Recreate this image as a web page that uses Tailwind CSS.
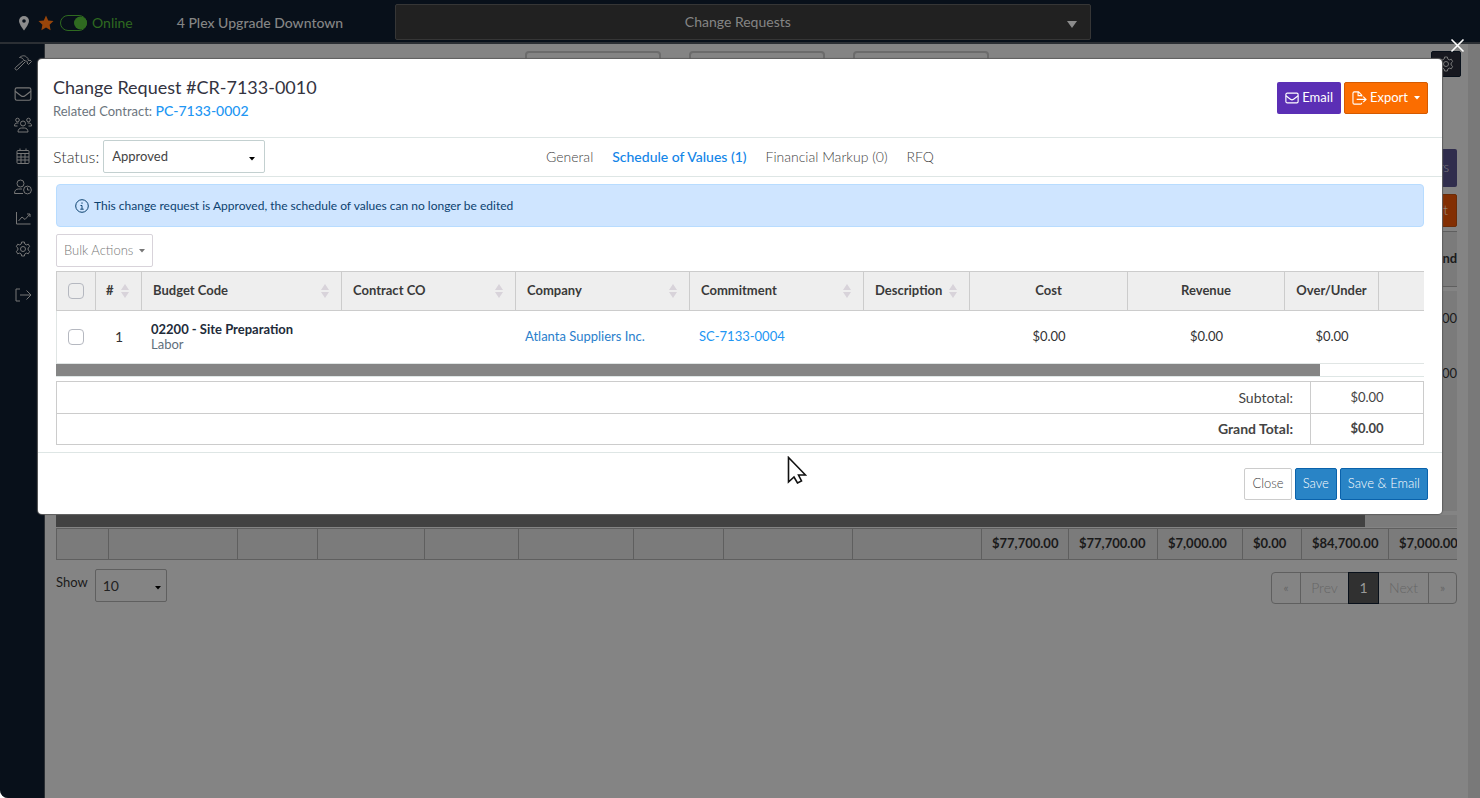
<!DOCTYPE html>
<html lang="en">
<head>
<meta charset="utf-8">
<title>Change Requests</title>
<script src="https://cdn.jsdelivr.net/npm/@tailwindcss/browser@4"></script>
</head>
<body class="bg-white font-['Lato',sans-serif] text-[13px] text-[#333]">
<svg class="hidden" aria-hidden="true">
  <symbol id="sort" viewBox="0 0 8 14"><path d="M4 0L8 6H0zM4 14L0 8h8z" fill="#d8d3da"/></symbol>
  <symbol id="caret" viewBox="0 0 6 4"><path d="M0 0h6L3 3.5z" fill="currentColor"/></symbol>
  <symbol id="mail" viewBox="0 0 16 14"><rect x="1" y="1.5" width="14" height="11" rx="1.5"/><path d="M1 4.5l5.2 4a3 3 0 0 0 3.6 0l5.2-4"/></symbol>
  <symbol id="gear" viewBox="0 0 16 16"><circle cx="8" cy="8" r="2.5"/><path d="M6.6 1h2.8l.4 2 1.5.9 2-.7 1.4 2.4-1.6 1.4v2l1.6 1.4-1.4 2.4-2-.7-1.5.9-.4 2H6.6l-.4-2-1.5-.9-2 .7-1.400-2.400L2.900 9V7L1.300 5.600l1.400-2.400 2 .7L6.200 3z"/></symbol>
</svg>

<div class="relative flex min-h-screen flex-col overflow-hidden rounded-bl-lg bg-[#848484]">
  <header class="flex h-11 items-center border-b-2 border-[#2b2f34] bg-[#08101a] pt-0.5">
    <div class="flex w-[395px] items-center pt-0.5">
      <svg class="ml-[18px] h-4 w-3" viewBox="0 0 12 16"><path d="M6 1a5 5 0 0 0-5 5c0 3.200 5 9.500 5 9.500S11 9.200 11 6a5 5 0 0 0-5-5z" fill="#8c8c8c"/><circle cx="6" cy="6" r="1.800" fill="#08101a"/></svg>
      <svg class="ml-2 h-4 w-4" viewBox="0 0 16 16"><path d="M8 .5l2.200 4.900 5.300.6-3.900 3.700 1 5.600L8 12.600l-4.600 2.700 1-5.600L.5 6l5.300-.6z" fill="#98450a"/></svg>
      <button class="ml-1.5 flex items-center gap-1 text-[#2f6a20]" role="switch" aria-checked="true">
        <svg class="h-4 w-7" viewBox="0 0 28 16"><rect x=".5" y=".5" width="26" height="15" rx="7.500" fill="none" stroke="currentColor"/><circle cx="20.500" cy="8" r="6.500" fill="currentColor"/></svg>
        <span class="text-sm">Online</span>
      </button>
      <span class="ml-11 text-sm font-medium text-[#858585]">4 Plex Upgrade Downtown</span>
    </div>
    <div class="relative w-[47%]">
      <select aria-label="Module" class="block h-9 w-full appearance-none rounded-xs border border-[#363636] bg-[#212121] pr-2.5 text-center text-sm text-[#858585]"><option>Change Requests</option></select>
      <svg class="pointer-events-none absolute top-[17px] right-3.5 h-[7px] w-2.5 text-[#8c8c8c]" viewBox="0 0 6 4" preserveAspectRatio="none"><path d="M0 0h6L3 4z" fill="currentColor"/></svg>
    </div>
  </header>

  <div class="flex flex-1">
    <nav class="flex w-[45px] shrink-0 flex-col items-center border-r border-[#2b2f34] bg-[#08101a] pt-[11px] pl-0.5 text-[#777]">
      <ul class="flex flex-col gap-[15px] [&_svg]:h-4 [&_svg]:w-[18px] [&_svg]:fill-none [&_svg]:stroke-current">
        <li><a href="#" aria-label="Jobs"><svg viewBox="0 0 18 16"><path d="M9.500 5.500L1.500 12.500a1.300 1.300 0 0 0 2 2L11 7M5.500 2.500C8 .3 11 .3 12.500 2l1.500 1.500v1.500l1 .8 1-.8 1.500 1.500-3 3L13 8l.5-1-1-1H11L9.500 4.500C8.500 3 7 2.500 5.500 2.500z"/></svg></a></li>
        <li><a href="#" aria-label="Messages"><svg><use href="#mail"/></svg></a></li>
        <li><a href="#" aria-label="Team"><svg viewBox="0 0 18 16"><circle cx="9" cy="6.500" r="2.500"/><circle cx="3.500" cy="3" r="1.800"/><circle cx="14.500" cy="3" r="1.800"/><path d="M4 15c0-2.500 1.500-4 3.500-4h3c2 0 3.500 1.500 3.500 4zM.5 9c0-2 1-3 2.500-3h1.500M17.500 9c0-2-1-3-2.500-3h-1.500M.5 9h3M14.500 9h3"/></svg></a></li>
        <li><a href="#" aria-label="Calendar"><svg viewBox="0 0 18 16"><rect x="3" y="2.500" width="12" height="13" rx="1"/><path d="M3 5.500h12M3 9h12M3 12h12M7 5.500v10M11 5.500v10M6 .5v2M12 .5v2"/></svg></a></li>
        <li><a href="#" aria-label="Time"><svg viewBox="0 0 18 16"><circle cx="6.500" cy="4.500" r="3.500"/><path d="M9 14.500H.5c0-3 1.500-4.500 4-4.500h3.500M13.500 8.500v2.500h2"/><circle cx="13.500" cy="11" r="3.900"/></svg></a></li>
        <li><a href="#" aria-label="Reports"><svg viewBox="0 0 18 16"><path d="M2.500 2v12h14M4.500 11l3.500-4 3 2.500L16 4M13 4h3v3"/></svg></a></li>
        <li><a href="#" aria-label="Settings"><svg><use href="#gear"/></svg></a></li>
        <li class="pt-[15px]"><a href="#" aria-label="Log out"><svg viewBox="0 0 18 16"><path d="M6 2H2v12h4M6 8h11M12.500 3.500L17 8l-4.500 4.500"/></svg></a></li>
      </ul>
    </nav>

    <main class="flex min-w-0 flex-1 flex-col px-[11px] text-[#1a1a1a]">
      <div class="grid grid-cols-[1fr_auto_1fr] pt-[7px]">
        <div></div>
        <div class="flex gap-7">
          <div class="h-20 w-[136px] rounded border-2 border-[#6b6b6b]"></div>
          <div class="h-20 w-[136px] rounded border-2 border-[#6b6b6b]"></div>
          <div class="h-20 w-[136px] rounded border-2 border-[#6b6b6b]"></div>
        </div>
        <button aria-label="Page settings" class="-mr-1 flex h-[26px] w-[30px] items-center justify-center justify-self-end rounded-xs border border-[#08101a] bg-[#17181f] text-[#777]"><svg class="h-4 w-4 fill-none stroke-current"><use href="#gear"/></svg></button>
      </div>
      <div class="flex flex-col items-end gap-[7px] pt-[18px]">
        <button class="h-[38px] rounded-xs bg-[#302d4d] px-2 font-light text-[#858585]">Filters</button>
        <button class="h-[33px] rounded-xs border border-[#6b2c08] bg-[#832f03] px-2 font-light text-[#999]">Export</button>
      </div>
      <div class="mt-1 flex h-14 items-center justify-end overflow-hidden border-y border-[#5f5f5f] bg-[#7b7b7b] font-bold"><span class="-mr-3">Over/Under</span></div>
      <div class="mt-1 flex h-[220px] flex-col items-end bg-[#7b7b7b]">
        <span class="flex h-[55px] items-center">$7,000.00</span>
        <span class="flex h-[55px] items-center">$7,000.00</span>
      </div>
      <div class="mt-1 h-3 bg-[#7b7b7b]"><div class="h-3 bg-[#424242]" style="width:93.4%"></div></div>
      <div class="mt-px overflow-hidden">
        <table class="w-[105%] table-fixed border-separate border-spacing-0 border-y border-l border-[#5f5f5f] bg-[#7b7b7b] font-bold [&_td]:h-[30px] [&_td]:border-r [&_td]:border-[#5f5f5f] [&_td]:p-0 [&_td]:pl-2.5">
          <colgroup><col class="w-[52px]"><col class="w-[129px]"><col class="w-[80px]"><col class="w-[107px]"><col class="w-[94px]"><col class="w-[115px]"><col class="w-[90px]"><col class="w-[129px]"><col class="w-[129px]"><col class="w-[87px]"><col class="w-[89px]"><col class="w-[85px]"><col class="w-[59px]"><col class="w-[87px]"><col></colgroup>
          <tr><td></td><td></td><td></td><td></td><td></td><td></td><td></td><td></td><td></td><td>$77,700.00</td><td>$77,700.00</td><td>$7,000.00</td><td>$0.00</td><td>$84,700.00</td><td>$7,000.00</td></tr>
        </table>
      </div>
      <div class="flex items-start justify-between pt-[9px]">
        <div class="flex gap-[7px]">
          <label for="show" class="pt-1">Show</label>
          <div class="relative">
            <select id="show" class="block h-[33px] w-[72px] appearance-none rounded-xs border border-[#5f5f5f] px-[7px] text-sm text-[#222]"><option>10</option></select>
            <svg class="pointer-events-none absolute top-[17px] right-1.5 h-1 w-1.5 text-black"><use href="#caret"/></svg>
          </div>
        </div>
        <div class="mt-[3px] flex h-8 rounded border border-[#5f5f5f] text-sm text-[#666]">
          <button class="w-[29px] border-r border-[#5f5f5f] text-xs">«</button>
          <button class="w-[47px] font-light">Prev</button>
          <button class="-my-px w-[31px] border border-[#08101a] bg-[#303030] text-[#999]">1</button>
          <button class="w-[50px] border-r border-[#5f5f5f] font-light">Next</button>
          <button class="w-[27px] text-xs">»</button>
        </div>
      </div>
    </main>
    <div class="w-3 shrink-0 bg-[#797979]"></div>
  </div>

  <!-- Change request dialog -->
  <button aria-label="Close dialog" class="absolute top-[38px] right-[15px] text-white"><svg class="h-[15px] w-[15px]" viewBox="0 0 15 15" fill="none" stroke="currentColor" stroke-width="1.600"><path d="M1.500 1.500l12 12M13.500 1.500l-12 12"/></svg></button>
  <section role="dialog" aria-label="Change Request" class="absolute inset-x-[38px] top-[59px] rounded bg-white shadow-[0_0_1px_1px_#5f5f5f]">
    <div class="flex h-[79px] items-start justify-between border-b border-[#dee6e5] pr-3.5 pl-[15px]">
      <div class="pt-4">
        <h1 class="text-lg leading-6 text-[#33333f]">Change Request #CR-7133-0010</h1>
        <p class="leading-6 text-[#6c757d]">Related Contract: <a href="#" class="text-sm leading-6 font-medium text-[#2196f3]">PC-7133-0002</a></p>
      </div>
      <div class="flex gap-[3px] pt-[23px] text-white">
        <button class="flex h-8 items-center gap-[3px] rounded-xs bg-[#5b2fb5] px-2"><svg class="h-3.5 w-3.5 fill-none stroke-current stroke-[1.3]"><use href="#mail"/></svg>Email</button>
        <button class="flex h-8 items-center gap-[3px] rounded-xs border border-[#d45a00] bg-[#fb6d00] px-[7px]"><svg class="h-3.5 w-[15px]" viewBox="0 0 16 15" fill="none" stroke="currentColor" stroke-width="1.200"><path d="M10.500 6V4.500L7 1H2.500Q1 1 1 2.500v10Q1 14 2.500 14H9q1.500 0 1.500-1.500M6.500 1v4h4M5 9h10M12 6l3 3-3 3"/></svg>Export<svg class="ml-[3px] h-1 w-1.5"><use href="#caret"/></svg></button>
      </div>
    </div>

    <div class="grid h-[39px] grid-cols-[1fr_auto_1fr] items-start border-b border-[#dee6e5] pt-0.5 pl-[15px]">
      <div class="flex items-center gap-1">
        <label for="status" class="text-base font-light">Status:</label>
        <div class="relative">
          <select id="status" class="block h-[33px] w-[162px] appearance-none rounded-xs border border-[#c3d0d0] px-2 text-[13px] text-[#444]"><option>Approved</option></select>
          <svg class="pointer-events-none absolute top-[17px] right-2.5 h-1 w-1.5 text-black"><use href="#caret"/></svg>
        </div>
      </div>
      <nav class="-ml-[15px] flex h-[34px] items-center gap-[19px] text-sm font-light text-[#444]">
        <a href="#">General</a>
        <a href="#" class="font-medium text-[#1285e8]">Schedule of Values (1)</a>
        <a href="#">Financial Markup (0)</a>
        <a href="#">RFQ</a>
      </nav>
      <div></div>
    </div>

    <div class="px-[18px] pt-[7px] pb-[7px]">
      <div class="flex h-[43px] items-center gap-[5px] rounded border border-[#b8dcff] bg-[#cfe5ff] px-[18px] text-xs text-[#0c4270]">
        <svg class="h-3.5 w-3.5" viewBox="0 0 14 14" fill="none" stroke="currentColor"><circle cx="7" cy="7" r="6.300"/><path d="M5.500 6.500H7v3.500M5.300 10.200h3.400M7 3.400v1.400"/></svg>
        <span>This change request is Approved, the schedule of values can no longer be edited</span>
      </div>
      <button class="mt-[7px] flex h-[33px] items-center gap-1.5 rounded-xs border border-[#d8d3da] px-[7px] font-light text-[#777]">Bulk Actions<svg class="h-1 w-1.5"><use href="#caret"/></svg></button>

      <div class="mt-1 overflow-hidden">
        <table class="w-[108%] table-fixed border-separate border-spacing-0 [&_input]:ml-[11px] [&_input]:block [&_input]:h-4 [&_input]:w-4 [&_input]:appearance-none [&_input]:rounded [&_input]:border [&_input]:border-[#b5b8c0] [&_input]:bg-white">
          <colgroup><col class="w-[40px]"><col class="w-[46px]"><col class="w-[200px]"><col class="w-[174px]"><col class="w-[174px]"><col class="w-[174px]"><col class="w-[106px]"><col class="w-[158px]"><col class="w-[157px]"><col class="w-[94px]"><col></colgroup>
          <thead class="bg-[#eee] text-left text-[#3a3a3a] [&_svg]:h-3.5 [&_svg]:w-2 [&_th]:h-[40px] [&_th]:border-y [&_th]:border-r [&_th]:border-[#ccc] [&_th]:p-0 [&_th]:font-bold">
            <tr>
              <th class="border-l"><input type="checkbox" aria-label="Select all" class="bg-transparent!"></th>
              <th><div class="flex items-center justify-between pr-3 pl-2.5">#<svg><use href="#sort"/></svg></div></th>
              <th><div class="flex items-center justify-between pr-3 pl-[11px]">Budget Code<svg><use href="#sort"/></svg></div></th>
              <th><div class="flex items-center justify-between pr-3 pl-[11px]">Contract CO<svg><use href="#sort"/></svg></div></th>
              <th><div class="flex items-center justify-between pr-3 pl-[11px]">Company<svg><use href="#sort"/></svg></div></th>
              <th><div class="flex items-center justify-between pr-3 pl-[11px]">Commitment<svg><use href="#sort"/></svg></div></th>
              <th><div class="flex items-center justify-between pr-3 pl-[11px]">Description<svg><use href="#sort"/></svg></div></th>
              <th class="text-center">Cost</th>
              <th class="text-center">Revenue</th>
              <th class="text-center">Over/Under</th>
              <th></th>
            </tr>
          </thead>
          <tbody class="[&_td]:h-[53px] [&_td]:border-b [&_td]:border-[#e0e5e4] [&_td]:p-0 [&_td]:pl-[9px]">
            <tr>
              <td class="border-l pl-0!"><input type="checkbox" aria-label="Select line 1"></td>
              <td class="pl-0! text-center text-sm">1</td>
              <td><div class="leading-[15px]"><div class="font-bold text-[#222b3a]">02200 - Site Preparation</div><div class="text-[#5f6f7c]">Labor</div></div></td>
              <td></td>
              <td><a href="#" class="text-[#2a80cc]">Atlanta Suppliers Inc.</a></td>
              <td><a href="#" class="text-[#2196f3]">SC-7133-0004</a></td>
              <td></td>
              <td class="pl-0! text-center">$0.00</td>
              <td class="pl-0! text-center">$0.00</td>
              <td class="pl-0! text-center">$0.00</td>
              <td></td>
            </tr>
          </tbody>
        </table>
        <div class="border-b border-[#dee6e5]"><div class="h-3 bg-[#858585]" style="width:92.4%"></div></div>
      </div>

      <table class="mt-1 w-full border-collapse text-[#444] [&_td]:w-[113px] [&_td]:text-center [&_td,&_th]:p-0 [&_th]:pr-[17px] [&_th]:text-right">
        <tr class="h-8"><th class="border border-[#ccc] text-sm font-normal">Subtotal:</th><td class="border border-[#ccc]">$0.00</td></tr>
        <tr class="h-[31px]"><th class="border border-[#ccc] text-sm font-bold">Grand Total:</th><td class="border border-[#ccc] font-bold">$0.00</td></tr>
      </table>
    </div>

    <div class="flex justify-end gap-[3px] border-t border-[#dee6e5] px-3.5 pt-[15px] pb-3.5">
      <button class="h-8 rounded-xs border border-[#ccc] px-[7px] font-light text-[#444]">Close</button>
      <button class="h-8 rounded-xs border border-[#0a62ab] bg-[#2984c6] px-[7px] font-light text-white">Save</button>
      <button class="h-8 rounded-xs border border-[#0a62ab] bg-[#2984c6] px-[7px] font-light text-white">Save &amp; Email</button>
    </div>
  </section>

  <!-- Mouse pointer -->
  <svg class="pointer-events-none absolute top-[456px] left-[787px] h-7 w-5" viewBox="0 0 20 28"><path d="M1.500 1.500v24.500l5.500-5 3.500 6 4-2-3-6h7z" fill="#fff" stroke="#111" stroke-width="1.600"/></svg>
</div>
</body>
</html>
